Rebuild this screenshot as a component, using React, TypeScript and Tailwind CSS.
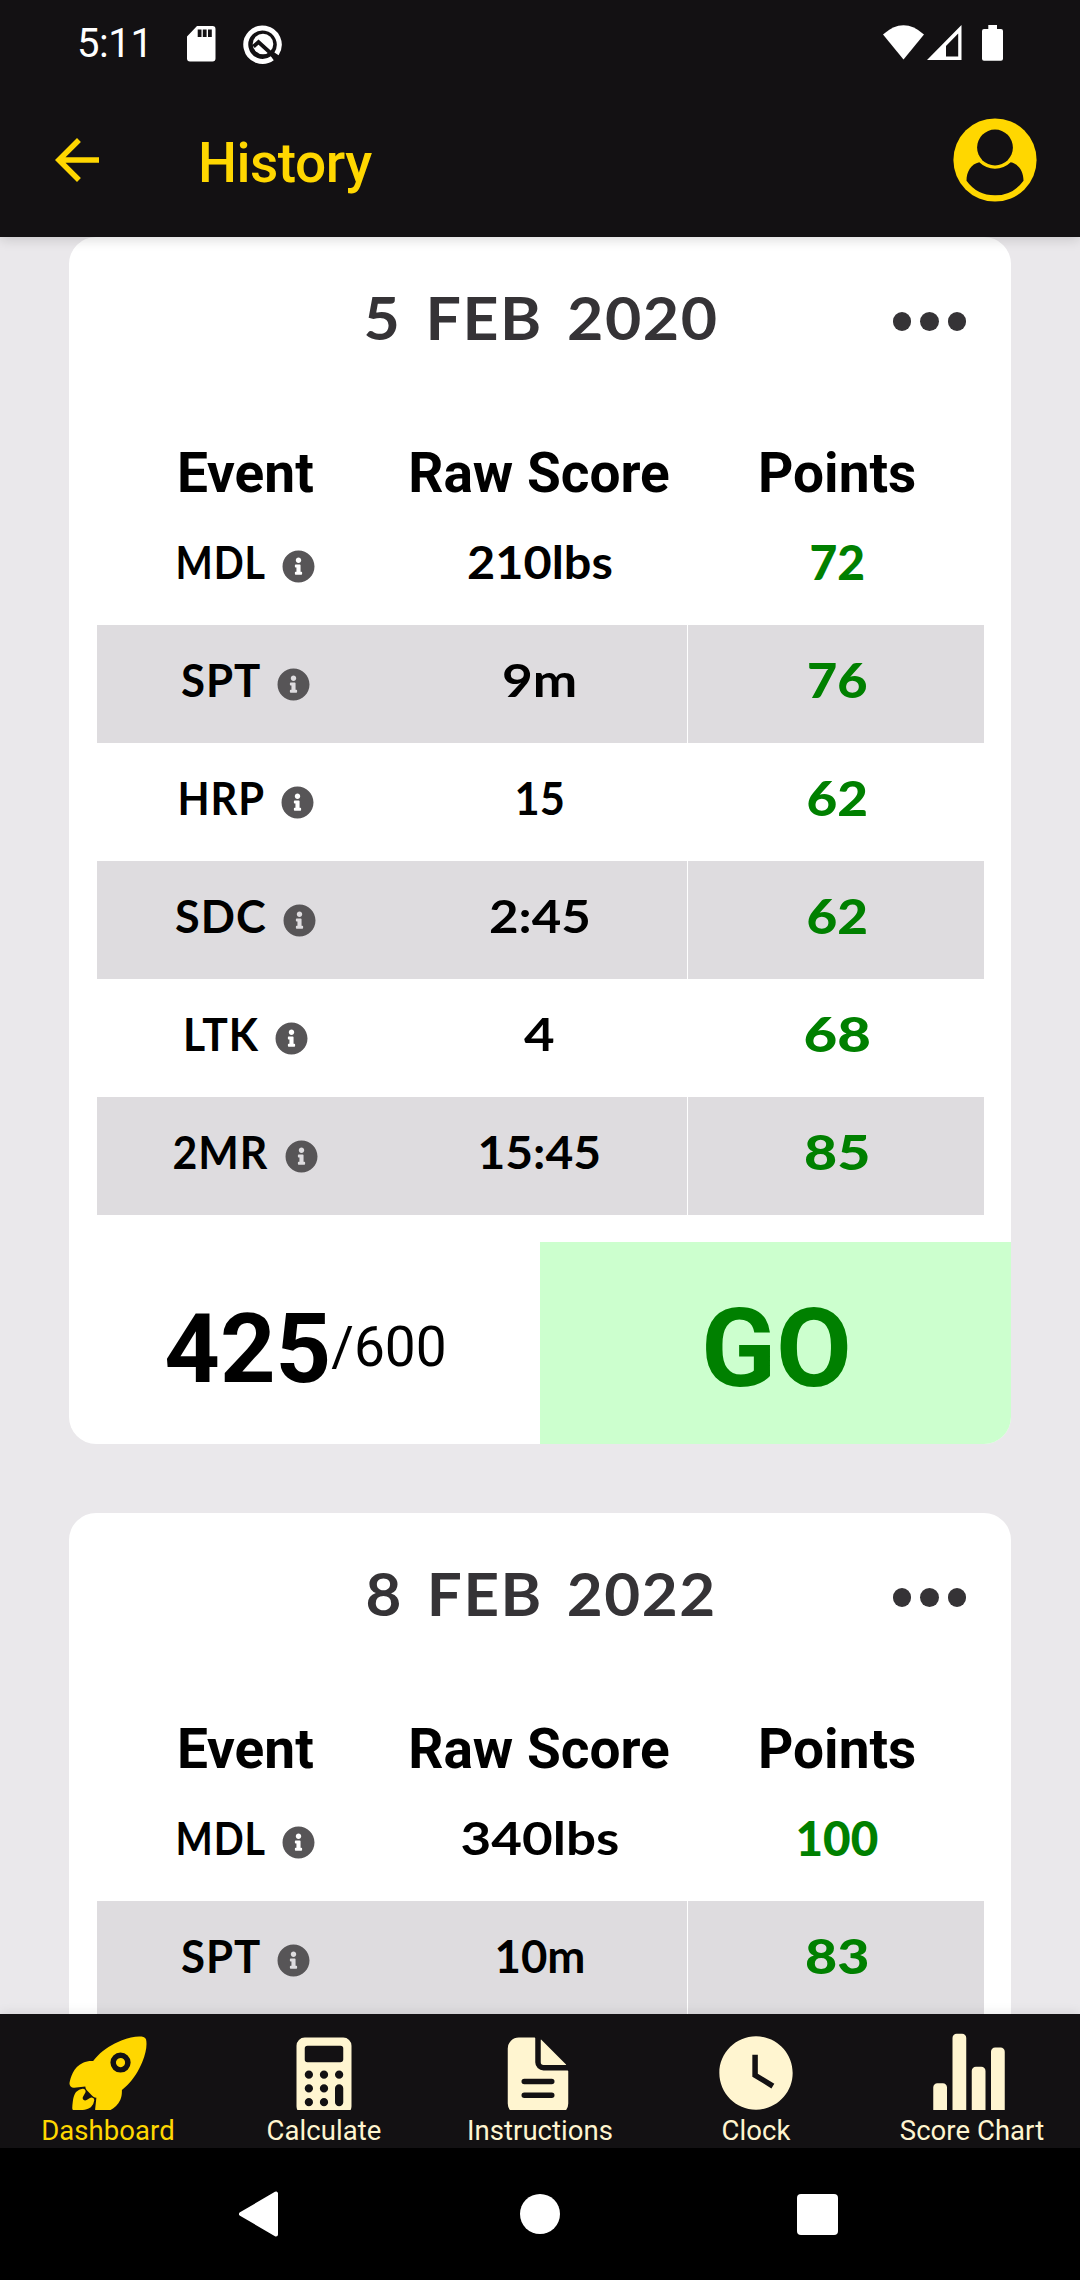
import React from "react";
import { FaInfoCircle } from "react-icons/fa";
import { IoRocket, IoCalculator, IoDocumentText, IoStatsChart } from "react-icons/io5";
import { MdWatchLater } from "react-icons/md";

type Cell = { text: string; width: number };
type Row = { event: Cell; raw: Cell; points: Cell };

const EVENTS: Record<string, Cell> = {
  MDL: { text: "MDL", width: 86 },
  SPT: { text: "SPT", width: 76 },
  HRP: { text: "HRP", width: 84 },
  SDC: { text: "SDC", width: 88 },
  LTK: { text: "LTK", width: 72 },
  MR: { text: "2MR", width: 92 },
};

const FIRST: Row[] = [
  { event: EVENTS.MDL, raw: { text: "210lbs", width: 142 }, points: { text: "72", width: 52 } },
  { event: EVENTS.SPT, raw: { text: "9m", width: 71 }, points: { text: "76", width: 57 } },
  { event: EVENTS.HRP, raw: { text: "15", width: 46 }, points: { text: "62", width: 58 } },
  { event: EVENTS.SDC, raw: { text: "2:45", width: 98 }, points: { text: "62", width: 58 } },
  { event: EVENTS.LTK, raw: { text: "4", width: 27 }, points: { text: "68", width: 64 } },
  { event: EVENTS.MR, raw: { text: "15:45", width: 120 }, points: { text: "85", width: 63 } },
];

const SECOND: Row[] = [
  { event: EVENTS.MDL, raw: { text: "340lbs", width: 155 }, points: { text: "100", width: 79 } },
  { event: EVENTS.SPT, raw: { text: "10m", width: 87 }, points: { text: "83", width: 61 } },
];

/** Text stretched horizontally so that it fills a given width. */
function Fit({ text, width, className = "" }: Cell & { className?: string }) {
  const ref = React.useRef<HTMLSpanElement>(null);
  const [scale, setScale] = React.useState(1);
  React.useLayoutEffect(() => {
    const measure = () => {
      if (ref.current) setScale((width + 4) / ref.current.offsetWidth);
    };
    measure();
    document.fonts?.ready.then(measure);
  }, [width]);
  return (
    <span className="flex justify-center" style={{ width }}>
      <span ref={ref} className={`shrink-0 whitespace-nowrap ${className}`} style={{ transform: `scaleX(${scale})` }}>
        {text}
      </span>
    </span>
  );
}

function StatusBar() {
  return (
    <div className="flex h-[86px] items-start justify-between pt-[20px] pr-[77px] pl-[77px]">
      <div className="flex items-center">
        <span className="w-[110px] text-[40px] leading-[48px] tracking-[-0.4px] text-white">5:11</span>
        <svg className="h-[36px] w-[29px]" viewBox="0 0 29 36">
          <path fill="#fff" fillRule="evenodd" d="M10 0H25.500a3 3 0 0 1 3 3V32.500a3 3 0 0 1-3 3H3a3 3 0 0 1-3-3V10.500ZM10.700 3.500v7.500h3.800V3.500ZM15.800 3.500v7.500h3.800V3.500ZM21 3.500v7.500h3.800V3.500Z" />
        </svg>
        <svg className="ml-[27px] h-[40px] w-[40px]" viewBox="0 0 40 40" fill="none">
          <path d="M29.300 34.200A16.700 16.700 0 1 1 33.500 29.800" stroke="#fff" strokeWidth="5" />
          <circle cx="20" cy="20" r="10.300" fill="#fff" />
          <path d="M10.500 22.500 15.500 18 32.500 33.500" stroke="#131113" strokeWidth="3.800" />
        </svg>
      </div>
      <div className="flex items-start pt-[5px]">
        <svg className="h-[36px] w-[41px]" viewBox="0 0 41 36">
          <path fill="#fff" d="M0 9.500Q20.500-9 41 9.500L20.500 34.500Z" />
        </svg>
        <svg className="ml-[3px] h-[36px] w-[35px]" viewBox="0 0 35 36">
          <path fill="#fff" fillRule="evenodd" d="M34.500 0V35H0ZM31.200 8.500 19 21V31.500H31.200Z" />
        </svg>
        <svg className="ml-[20px] h-[36px] w-[21px]" viewBox="0 0 21 36">
          <path fill="#fff" d="M6.300 0h8.700v4H19a2 2 0 0 1 2 2V33.700a2 2 0 0 1-2 2H2a2 2 0 0 1-2-2V6a2 2 0 0 1 2-2H6.300Z" />
        </svg>
      </div>
    </div>
  );
}

function Header() {
  return (
    <header className="relative z-10 h-[237px] shrink-0 bg-[#131113] shadow-[0_2px_12px_rgba(0,0,0,0.16)]">
      <StatusBar />
      <div className="flex h-[148px] items-center pr-[43px] pl-[44px]">
        <svg className="h-[66px] w-[66px]" viewBox="0 0 24 24">
          <path fill="#FFD700" d="M20 11H7.830l5.590-5.590L12 4l-8 8 8 8 1.410-1.410L7.830 13H20v-2z" />
        </svg>
        <h1 className="mt-[6px] ml-[88px] text-[55px] leading-[64px] font-medium tracking-[-0.5px] text-[#FFD700]">History</h1>
        <svg className="ml-auto h-[84px] w-[84px]" viewBox="0 0 84 84">
          <circle cx="42" cy="42" r="41.600" fill="#FFD700" />
          <circle cx="42" cy="29.500" r="17.900" fill="#131113" />
          <path fill="#131113" d="M26.300 44.300A22.300 22.300 0 0 0 57.700 44.300C66 46 70.500 54 70.500 62.700Q60 77.300 42 77.300T13.500 62.700C13.500 54 18 46 26.300 44.300Z" />
        </svg>
      </div>
    </header>
  );
}

function Card({ date, dateWidth, rows, total }: { date: string; dateWidth: number; rows: Row[]; total?: string }) {
  return (
    <section className={`w-[942px] shrink-0 overflow-hidden bg-white ${total ? "rounded-[27px]" : "rounded-t-[27px]"}`}>
      <div className="relative flex h-[196px] justify-center pt-[44px] pl-[3px] font-['Lato',sans-serif] text-[60px] leading-[72px] font-bold text-[#353336]">
        <Fit text={date} width={dateWidth} className="tracking-[1.500px] [word-spacing:7px]" />
        <div className="absolute top-[75px] right-[45px] flex gap-[9px]">
          <span className="size-[18.500px] rounded-full bg-[#353336]" />
          <span className="size-[18.500px] rounded-full bg-[#353336]" />
          <span className="size-[18.500px] rounded-full bg-[#353336]" />
        </div>
      </div>
      <div className="mr-[27px] ml-[28px]">
        <div className="grid h-[74px] grid-cols-3 text-center text-[55px] leading-[80px] font-bold text-black">
          <span className="pl-px">Event</span>
          <span className="pr-[3px]">Raw Score</span>
          <span className="pl-[2px]">Points</span>
        </div>
        {rows.map((row, i) => (
          <div
            key={i}
            className={`grid h-[118px] grid-cols-3 pt-[27px] font-['Lato',sans-serif] text-[46px] leading-[56px] font-bold text-black ${i % 2 ? "bg-[#dedcdf]" : ""}`}
          >
            <div className="flex justify-center pl-[3px]">
              <Fit {...row.event} className="tracking-[1px]" />
              <FaInfoCircle className="mt-[16px] ml-[18px] size-[33px] text-[#575557]" />
            </div>
            <div className="flex justify-center pr-[2px]">
              <Fit {...row.raw} />
            </div>
            <div className="relative flex justify-center pl-[2px]">
              <Fit {...row.points} className="text-[47px] font-black text-[#008000]" />
              <span className="absolute -top-[27px] -left-px h-[118px] w-px bg-white" />
            </div>
          </div>
        ))}
      </div>
      {total && (
        <div className="mt-[27px] flex h-[202px]">
          <div className="flex w-1/2 items-start justify-center pl-[2px] text-black">
            <span className="pt-[50px] text-[97px] leading-[114px] font-bold">{total}</span>
            <span className="pt-[73px] text-[55px] leading-[64px]">/600</span>
          </div>
          <div className="w-1/2 bg-[#ccffce] pt-[43px] pl-[2px] text-center text-[110px] leading-[128px] font-bold text-[#008000]">GO</div>
        </div>
      )}
    </section>
  );
}

const TABS = [
  { label: "Dashboard", Icon: IoRocket, active: true, nudge: "mt-[3px]" },
  { label: "Calculate", Icon: IoCalculator, nudge: "mt-[4px]" },
  { label: "Instructions", Icon: IoDocumentText, nudge: "mt-[4px] mr-[5px]" },
  { label: "Clock", Icon: MdWatchLater, nudge: "mt-px" },
  { label: "Score Chart", Icon: IoStatsChart, nudge: "mt-[3px] mr-[6px]" },
];

function TabBar() {
  return (
    <nav className="relative z-10 grid h-[134px] shrink-0 grid-cols-5 bg-[#131113] shadow-[0_-2px_10px_rgba(0,0,0,0.08)]">
      {TABS.map(({ label, Icon, active, nudge }) => (
        <div key={label} className={`flex flex-col items-center pt-[14px] ${active ? "text-[#FFD700]" : "text-[#FFF5D0]"}`}>
          <div className="flex h-[82px] justify-center overflow-hidden">
            <Icon className={`size-[88px] shrink-0 ${nudge}`} />
          </div>
          <span className="mt-[5px] text-[27.500px] leading-[32px] tracking-[0.05px] whitespace-nowrap">{label}</span>
        </div>
      ))}
    </nav>
  );
}

function SystemNav() {
  return (
    <div className="flex h-[132px] shrink-0 items-center bg-black pl-[239px]">
      <svg className="h-[46px] w-[39px]" viewBox="0 0 39 46">
        <path fill="#fff" stroke="#fff" strokeWidth="4" strokeLinejoin="round" d="M37 2.500V43.500L2 23Z" />
      </svg>
      <span className="ml-[242px] size-[40px] rounded-full bg-white" />
      <span className="ml-[237px] size-[41px] rounded-[4px] bg-white" />
    </div>
  );
}

export default function App() {
  return (
    <div className="flex h-[2280px] w-[1080px] flex-col overflow-hidden bg-[#eae8eb] font-['Roboto',sans-serif]">
      <Header />
      <main className="flex min-h-0 flex-1 flex-col items-center gap-[69px] overflow-hidden">
        <Card date="5 FEB 2020" dateWidth={351} rows={FIRST} total="425" />
        <Card date="8 FEB 2022" dateWidth={347} rows={SECOND} />
      </main>
      <TabBar />
      <SystemNav />
    </div>
  );
}
